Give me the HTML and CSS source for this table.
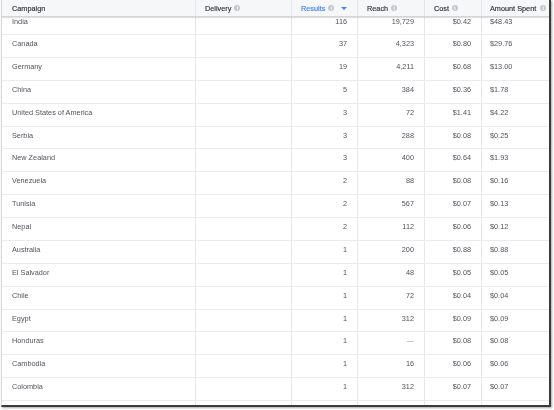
FILE: index.html
```html
<!DOCTYPE html>
<html>
<head>
<meta charset="utf-8">
<link rel="stylesheet" href="styles.css">
</head>
<body>
<div class="frame">
  <div class="head">
    <div class="hc">Campaign</div>
    <div class="hc">Delivery <span class="info">i</span></div>
    <div class="hc sorted">Results <span class="info">i</span> <span class="caret"></span></div>
    <div class="hc">Reach <span class="info">i</span></div>
    <div class="hc">Cost <span class="info">i</span></div>
    <div class="hc">Amount Spent <span class="info">i</span></div>
  </div>
  <div class="viewport">
    <div class="rows">
      <div class="row first"><div class="c">India</div><div class="c"></div><div class="c r">116</div><div class="c r">19,729</div><div class="c r">$0.42</div><div class="c">$48.43</div></div>
      <div class="row"><div class="c">Canada</div><div class="c"></div><div class="c r">37</div><div class="c r">4,323</div><div class="c r">$0.80</div><div class="c">$29.76</div></div>
      <div class="row"><div class="c">Germany</div><div class="c"></div><div class="c r">19</div><div class="c r">4,211</div><div class="c r">$0.68</div><div class="c">$13.00</div></div>
      <div class="row"><div class="c">China</div><div class="c"></div><div class="c r">5</div><div class="c r">384</div><div class="c r">$0.36</div><div class="c">$1.78</div></div>
      <div class="row"><div class="c">United States of America</div><div class="c"></div><div class="c r">3</div><div class="c r">72</div><div class="c r">$1.41</div><div class="c">$4.22</div></div>
      <div class="row"><div class="c">Serbia</div><div class="c"></div><div class="c r">3</div><div class="c r">288</div><div class="c r">$0.08</div><div class="c">$0.25</div></div>
      <div class="row"><div class="c">New Zealand</div><div class="c"></div><div class="c r">3</div><div class="c r">400</div><div class="c r">$0.64</div><div class="c">$1.93</div></div>
      <div class="row"><div class="c">Venezuela</div><div class="c"></div><div class="c r">2</div><div class="c r">88</div><div class="c r">$0.08</div><div class="c">$0.16</div></div>
      <div class="row"><div class="c">Tunisia</div><div class="c"></div><div class="c r">2</div><div class="c r">567</div><div class="c r">$0.07</div><div class="c">$0.13</div></div>
      <div class="row"><div class="c">Nepal</div><div class="c"></div><div class="c r">2</div><div class="c r">112</div><div class="c r">$0.06</div><div class="c">$0.12</div></div>
      <div class="row"><div class="c">Australia</div><div class="c"></div><div class="c r">1</div><div class="c r">200</div><div class="c r">$0.88</div><div class="c">$0.88</div></div>
      <div class="row"><div class="c">El Salvador</div><div class="c"></div><div class="c r">1</div><div class="c r">48</div><div class="c r">$0.05</div><div class="c">$0.05</div></div>
      <div class="row"><div class="c">Chile</div><div class="c"></div><div class="c r">1</div><div class="c r">72</div><div class="c r">$0.04</div><div class="c">$0.04</div></div>
      <div class="row"><div class="c">Egypt</div><div class="c"></div><div class="c r">1</div><div class="c r">312</div><div class="c r">$0.09</div><div class="c">$0.09</div></div>
      <div class="row"><div class="c">Honduras</div><div class="c"></div><div class="c r">1</div><div class="c r dash">—</div><div class="c r">$0.08</div><div class="c">$0.08</div></div>
      <div class="row"><div class="c">Cambodia</div><div class="c"></div><div class="c r">1</div><div class="c r">16</div><div class="c r">$0.06</div><div class="c">$0.06</div></div>
      <div class="row"><div class="c">Colombia</div><div class="c"></div><div class="c r">1</div><div class="c r">312</div><div class="c r">$0.07</div><div class="c">$0.07</div></div>
      <div class="row"><div class="c"></div><div class="c"></div><div class="c r"></div><div class="c r"></div><div class="c r"></div><div class="c"></div></div>
    </div>
  </div>
</div>
</body>
</html>
```
FILE: styles.css
```css
html, body {
  margin: 0;
  padding: 0;
  background: #ffffff;
}
body {
  width: 554px;
  height: 410px;
  overflow: hidden;
  font-family: "Liberation Sans", Arial, sans-serif;
  font-size: 7.3px;
  color: #50545b;
}
.frame {
  margin-left: 1px;
  width: 547px;
  height: 405px;
  border-left: 1px solid #d4d6da;
  border-right: 2px solid #3a3a3a;
  border-bottom: 2px solid #3a3a3a;
  box-shadow: 1px 1px 2px rgba(0,0,0,0.35);
  display: flex;
  flex-direction: column;
  overflow: hidden;
}
.head, .row {
  display: grid;
  grid-template-columns: 194px 96px 66px 67px 57px 1fr;
}
.head {
  height: 16px;
  background: #f6f7f9;
  border-bottom: 1px solid #d3d5d9;
  box-shadow: 0 1px 1px rgba(0,0,0,0.12);
  position: relative;
  z-index: 2;
  flex: none;
  will-change: transform;
}
.hc {
  border-right: 1px solid #e3e5e8;
  padding-left: 9px;
  display: flex;
  align-items: center;
  gap: 3px;
  font-weight: normal;
  color: #2f3238;
  white-space: nowrap;
  -webkit-text-stroke: 0.15px currentColor;
}
.head .hc:first-child { padding-left: 10px; }
.head .hc:last-child { border-right: none; padding-left: 8px; gap: 4px; }
.hc.sorted { color: #4080ff; }
.info {
  display: inline-block;
  width: 6px;
  height: 6px;
  border-radius: 50%;
  background: #c4c7cc;
  color: #fff;
  font-size: 5px;
  line-height: 6px;
  text-align: center;
  font-weight: bold;
  -webkit-text-stroke: 0;
}
.caret {
  display: inline-block;
  width: 0;
  height: 0;
  margin-left: 4px;
  border-left: 3px solid transparent;
  border-right: 3px solid transparent;
  border-top: 3px solid #4080ff;
}
.viewport {
  flex: 1;
  overflow: hidden;
}
.rows {
  will-change: transform;
}
.row {
  height: 22.875px;
  box-sizing: border-box;
  border-bottom: 1px solid #e9ebee;
}
.row.first {
  height: 18px;
}
.row.first .c {
  padding-top: 1px;
}
.c {
  border-right: 1px solid #e5e7ea;
  padding: 5px 10px 0 10px;
  line-height: 8px;
  white-space: nowrap;
}
.row .c:last-child { border-right: none; padding-left: 8px; }
.c.r { text-align: right; padding-right: 10px; }
.dash { color: #9a9ea5; }
```
